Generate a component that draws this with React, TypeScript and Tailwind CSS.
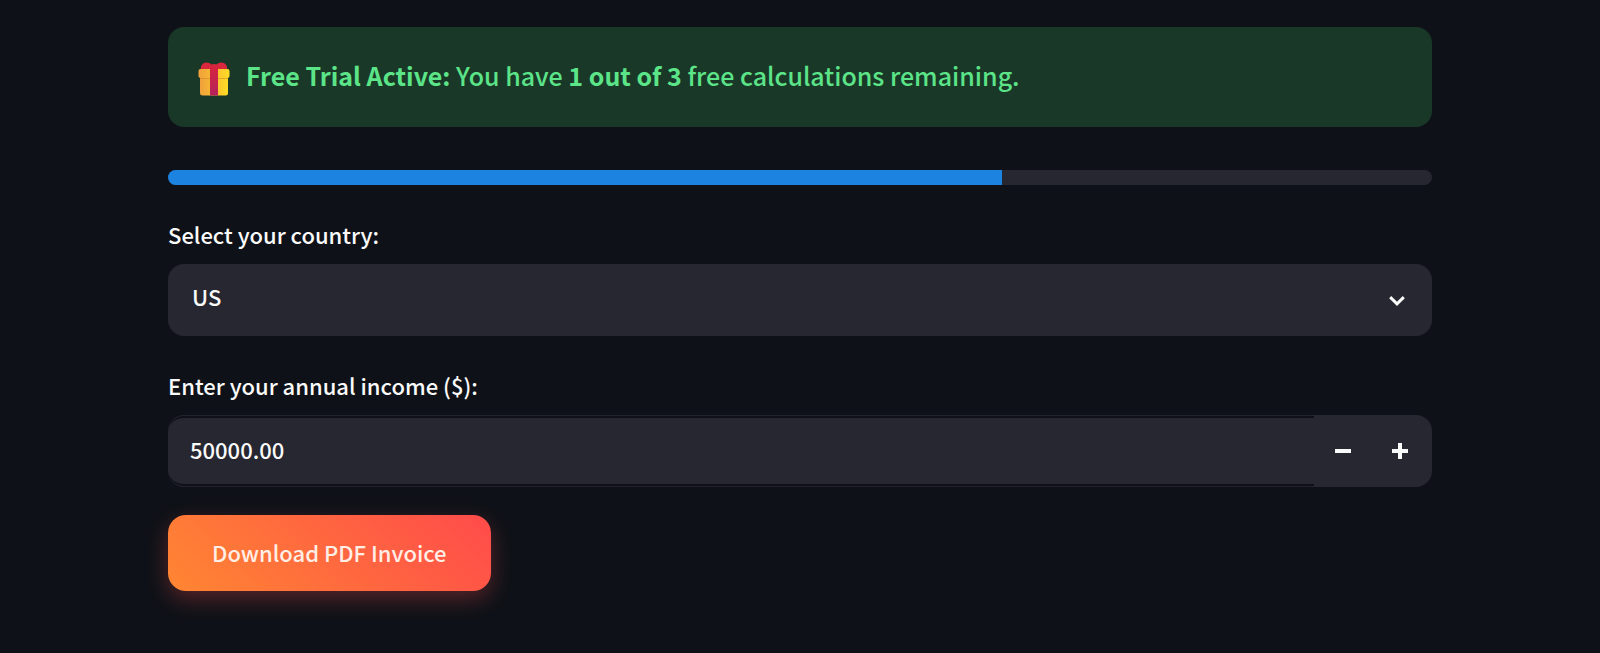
import { useState } from "react";

const countries = ["US", "UK", "Canada", "Germany", "India"];

const trial = { remaining: 1, total: 3 };

function GiftIcon() {
  return (
    <svg viewBox="0 0 32 34" className="mt-[5px] h-[34px] w-8 shrink-0" aria-hidden="true">
      <defs>
        <linearGradient id="gift-box" x1="0" x2="1" y1="0" y2="0">
          <stop offset="0" stopColor="#f0a03c" />
          <stop offset="1" stopColor="#ffdc26" />
        </linearGradient>
        <linearGradient id="gift-ribbon" x1="0" x2="0" y1="0" y2="1">
          <stop offset="0" stopColor="#d8243c" />
          <stop offset="1" stopColor="#b3215c" />
        </linearGradient>
      </defs>
      <path
        d="M3 9C2 4 4.500 0.500 8.500 0.500c2.500 0 4 1 5 2 1.500-.8 3.500-.8 5 0 1-1 2.500-2 5-2 4 0 6.500 3.500 5.500 8.500Z"
        fill="#d9273d"
      />
      <rect x="2" y="13" width="28" height="20.500" rx="2.500" fill="url(#gift-box)" />
      <rect x="0.500" y="7" width="31" height="9" rx="2" fill="url(#gift-box)" />
      <path d="M2 16h28v1H2Z" fill="#c9772c" opacity="0.5" />
      <path d="M12 3h8v30.500h-8Z" fill="url(#gift-ribbon)" />
    </svg>
  );
}

function TrialBanner() {
  return (
    <div
      role="status"
      className="flex items-start gap-4 rounded-2xl bg-[#1a3828] px-[30px] pt-[30px] pb-[31px] text-[25px] leading-9 text-[#5ce488]"
    >
      <GiftIcon />
      <p>
        <strong>Free Trial Active:</strong> You have{" "}
        <strong>
          {trial.remaining} out of {trial.total}
        </strong>{" "}
        free calculations remaining.
      </p>
    </div>
  );
}

function TrialProgress() {
  const used = Math.floor(((trial.total - trial.remaining) / trial.total) * 100);

  return (
    <div
      role="progressbar"
      aria-label="Free calculations used"
      aria-valuenow={used}
      className="mt-[43px] h-[15px] overflow-hidden rounded-full bg-[#262730]"
    >
      <div className="h-full bg-[#1c83e1]" style={{ width: `${used}%` }} />
    </div>
  );
}

export default function App() {
  const [country, setCountry] = useState("US");
  const [income, setIncome] = useState("50000.00");

  const step = (amount: number) =>
    setIncome((value) => Math.max(0, Number(value) + amount).toFixed(2));

  return (
    <main className="min-h-screen bg-[#0e1218] pt-[27px] pb-8 font-['Noto_Sans_CJK_SC','Noto_Sans',sans-serif] text-[22px] leading-8 font-medium text-[#fafafa]">
      <div className="mx-auto w-[79%]">
        <TrialBanner />
        <TrialProgress />

        <label htmlFor="country" className="mt-[33px] block">
          Select your country:
        </label>
        <div className="relative mt-[14px]">
          <select
            id="country"
            value={country}
            onChange={(e) => setCountry(e.target.value)}
            className="h-[72px] w-full appearance-none rounded-2xl bg-[#262730] px-6 pb-2 outline-none"
          >
            {countries.map((name) => (
              <option key={name}>{name}</option>
            ))}
          </select>
          <svg
            viewBox="0 0 16 10"
            className="pointer-events-none absolute top-8 right-[27px] h-[10px] w-4"
            fill="none"
            stroke="currentColor"
            strokeWidth="3"
            aria-hidden="true"
          >
            <path d="M1.200 1.200 8 7.800l6.800-6.600" />
          </svg>
        </div>

        <label htmlFor="income" className="mt-[33px] block">
          Enter your annual income ($):
        </label>
        <div className="mt-[14px] flex h-[72px] overflow-hidden rounded-2xl bg-[#262730] pr-1">
          <div className="min-w-0 flex-1 rounded-l-2xl border-y border-[#22232c]">
            <input
              id="income"
              type="number"
              value={income}
              onChange={(e) => setIncome(e.target.value)}
              className="h-full w-full rounded-l-2xl border-y-2 border-[#0e1019] bg-[#262730] px-[22px] pb-1 outline-none [appearance:textfield] [&::-webkit-inner-spin-button]:appearance-none"
            />
          </div>
          <button
            type="button"
            aria-label="Decrease income"
            onClick={() => step(-1000)}
            className="flex w-[57px] items-center justify-center"
          >
            <svg viewBox="0 0 16 16" className="size-4" aria-hidden="true">
              <path d="M0 6h16v4H0Z" fill="currentColor" />
            </svg>
          </button>
          <button
            type="button"
            aria-label="Increase income"
            onClick={() => step(1000)}
            className="flex w-[57px] items-center justify-center"
          >
            <svg viewBox="0 0 16 16" className="size-4" aria-hidden="true">
              <path d="M6 0h4v6h6v4h-6v6H6v-6H0V6h6Z" fill="currentColor" />
            </svg>
          </button>
        </div>

        <button
          type="button"
          className="mt-7 h-[76px] rounded-[18px] bg-[linear-gradient(45deg,#ff8632,#ff4b4b)] px-11 pb-[2px] text-[#ffeee6] shadow-[0_8px_22px_rgba(255,75,75,0.3)]"
        >
          Download PDF Invoice
        </button>
      </div>
    </main>
  );
}
